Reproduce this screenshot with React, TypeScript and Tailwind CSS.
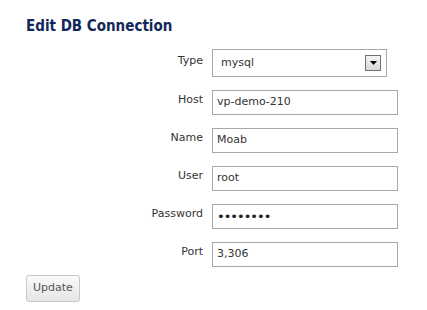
import React from 'react';

const fields = [
    { label: 'Host', value: 'vp-demo-210' },
    { label: 'Name', value: 'Moab' },
    { label: 'User', value: 'root' },
    { label: 'Password', value: '••••••••', password: true },
    { label: 'Port', value: '3,306' },
];

export default function App() {
    return (
        <div className="w-[427px] h-[310px] bg-white pl-[26px] pt-[14px] text-[#333] font-['DejaVu_Sans',Verdana,sans-serif]">
            <h2 className="text-[15px] font-bold text-[#13285a] leading-[24px] font-['DejaVu_Sans_Condensed','DejaVu_Sans',sans-serif]">
                Edit DB Connection
            </h2>

            <div className="mt-[11px] grid grid-cols-[177px_185px] gap-x-[9px] items-center">
                <label className="text-right text-[11px] pb-[4px]">Type</label>
                <div className="h-[28px] w-[175px] border border-[#a9a9a9] flex items-center pl-[8px] pr-[5px] text-[11px]">
                    <span className="flex-1">mysql</span>
                    <span className="w-[16px] h-[16px] border border-[#707070] bg-gradient-to-b from-[#f4f4f4] to-[#d8d8d8] flex items-center justify-center">
                        <svg width="7" height="4" viewBox="0 0 7 4">
                            <path d="M0 0h7L3.5 4z" fill="#000" />
                        </svg>
                    </span>
                </div>

                {fields.map((f) => (
                    <React.Fragment key={f.label}>
                        <label className="text-right text-[11px] pb-[4px] mt-[13px]">{f.label}</label>
                        <div className="mt-[13px] h-[25px] w-[186px] border border-[#a9a9a9] flex items-center pl-[4px] text-[11px]">
                            <span className={f.password ? 'text-[13px] tracking-[-1px] text-[#222]' : ''}>{f.value}</span>
                        </div>
                    </React.Fragment>
                ))}
            </div>

            <button className="mt-[8px] h-[27px] px-[6px] border border-[#c8c8c8] rounded-[3px] bg-gradient-to-b from-[#fafafa] to-[#e6e6e6] text-[11px] text-[#555]">
                Update
            </button>
        </div>
    );
}
